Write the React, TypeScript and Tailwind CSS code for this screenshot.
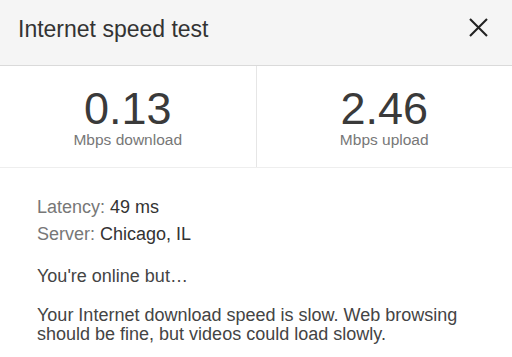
import React from 'react';

const Stat: React.FC<{ value: string; label: string }> = ({ value, label }) => (
    <div className="flex flex-1 flex-col items-center pt-[20px]">
        <div className="text-[45px] leading-none text-[#3a3a3a]">{value}</div>
        <div className="mt-px text-[15.5px] leading-none text-[#777]">{label}</div>
    </div>
);

export default function App() {
    return (
        <div className="h-[357px] w-[512px] overflow-hidden bg-white font-['Liberation_Sans',Arial,sans-serif]">
            <header className="flex h-[66px] items-start justify-between border-b border-[#dadada] bg-[#f5f5f5] pl-[18px] pr-[24px]">
                <h1 className="pt-[18px] text-[23px] leading-none text-[#333]">Internet speed test</h1>
                <button className="mt-[18px] text-[#222]" aria-label="Close">
                    <svg width="19" height="19" viewBox="0 0 19 19" fill="none" stroke="currentColor" strokeWidth="2.1">
                        <path d="M1 1 L18 18 M18 1 L1 18" />
                    </svg>
                </button>
            </header>

            <div className="flex h-[102px] border-b border-[#eeeeee]">
                <Stat value="0.13" label="Mbps download" />
                <div className="w-px bg-[#e6e6e6]" />
                <Stat value="2.46" label="Mbps upload" />
            </div>

            <div className="px-[37px] pt-[26px] text-[18px]">
                <div className="leading-[27px]">
                    <span className="text-[#777]">Latency: </span>
                    <span className="text-[#333]">49 ms</span>
                </div>
                <div className="leading-[27px]">
                    <span className="text-[#777]">Server: </span>
                    <span className="text-[#333]">Chicago, IL</span>
                </div>
                <p className="mt-[19px] leading-[19px] text-[#444]">You're online but…</p>
                <p className="mt-[20px] leading-[19px] text-[#444]">
                    Your Internet download speed is slow. Web browsing should be fine, but videos could load slowly.
                </p>
            </div>
        </div>
    );
}
